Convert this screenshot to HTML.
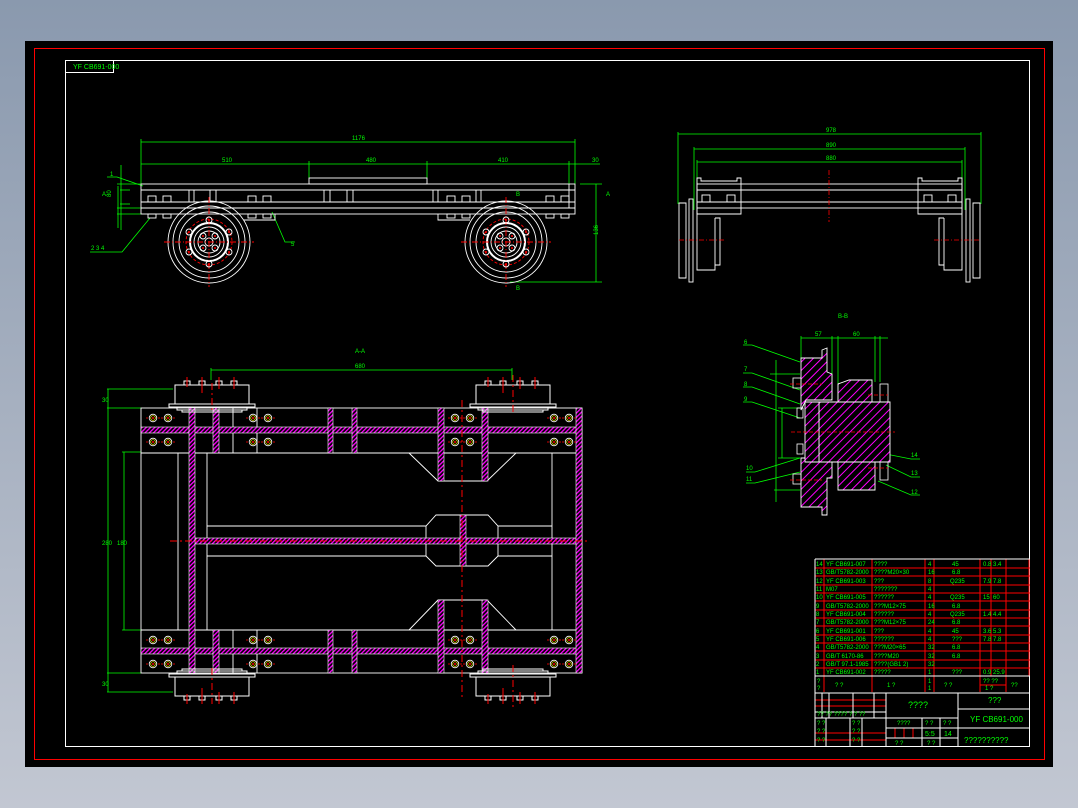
<!DOCTYPE html>
<html><head><meta charset="utf-8"><style>
html,body{margin:0;padding:0;width:1078px;height:808px;overflow:hidden;background:linear-gradient(#8a99ae,#c2c7d2);}
svg{display:block}
text{font-family:"Liberation Sans",sans-serif;fill:#00ff00;font-size:6px}
</style></head><body>
<svg width="1078" height="808" viewBox="0 0 1078 808" xmlns="http://www.w3.org/2000/svg">
<defs>
<pattern id="h" width="3" height="3" patternUnits="userSpaceOnUse" patternTransform="rotate(45)">
<rect width="3" height="3" fill="#000"/><rect width="1.3" height="3" fill="#ff00ff"/></pattern>
<pattern id="h2" width="6" height="6" patternUnits="userSpaceOnUse" patternTransform="rotate(45)">
<rect width="6" height="6" fill="#000"/><rect width="1" height="6" fill="#ff00ff"/></pattern>
<g id="bolt"><circle r="3.8" fill="none" stroke="#fff" stroke-width="0.8"/><circle r="2.3" fill="none" stroke="#ffff00" stroke-width="0.7"/><circle r="1" fill="#ff0000"/><line x1="-7" y1="0" x2="-5" y2="0" stroke="#f00" stroke-width="0.8"/><line x1="5" y1="0" x2="7" y2="0" stroke="#f00" stroke-width="0.8"/></g>
<g id="wheel" fill="none" stroke="#fff" stroke-width="0.9">
<circle r="41"/><circle r="36"/><circle r="30"/><circle r="19" stroke-width="2"/><circle r="15"/><circle r="11"/><circle r="4"/>
<circle r="23" stroke="#f00" stroke-dasharray="3 2"/>
<g stroke="#f00"><line x1="-45" y1="0" x2="45" y2="0" stroke-dasharray="6 2 1 2"/><line x1="0" y1="-45" x2="0" y2="45" stroke-dasharray="6 2 1 2"/></g>
<g><circle cx="0" cy="-22" r="3"/><circle cx="0" cy="22" r="3"/><circle cx="-20" cy="-10" r="3"/><circle cx="20" cy="-10" r="3"/><circle cx="-20" cy="10" r="3"/><circle cx="20" cy="10" r="3"/>
<circle cx="-6" cy="-6" r="3"/><circle cx="6" cy="-6" r="3"/><circle cx="-6" cy="6" r="3"/><circle cx="6" cy="6" r="3"/></g>
<g fill="#f00" stroke="none"><circle cx="0" cy="-22" r="1"/><circle cx="0" cy="22" r="1"/><circle cx="-6" cy="-6" r="1"/><circle cx="6" cy="-6" r="1"/><circle cx="-6" cy="6" r="1"/><circle cx="6" cy="6" r="1"/><circle cx="-20" cy="-10" r="1"/><circle cx="20" cy="-10" r="1"/><circle cx="-20" cy="10" r="1"/><circle cx="20" cy="10" r="1"/></g>
</g>
<g id="pwheel" fill="none" stroke="#fff" stroke-width="1">
<path d="M-37 0 V-19 H37 V0"/><rect x="-43" y="0" width="86" height="3"/><path d="M-35 3 V6 H35 V3"/><rect x="-30" y="6" width="60" height="2"/>
<g stroke="#fff"><rect x="-28" y="-23" width="6" height="4"/><rect x="-13" y="-23" width="6" height="4"/><rect x="4" y="-23" width="6" height="4"/><rect x="19" y="-23" width="6" height="4"/></g>
<g stroke="#f00"><line x1="-25" y1="-27" x2="-25" y2="-17"/><line x1="-10" y1="-27" x2="-10" y2="-11"/><line x1="7" y1="-27" x2="7" y2="-15"/><line x1="22" y1="-27" x2="22" y2="-15"/></g>
</g>
</defs>
<rect x="25" y="41" width="1028" height="726" fill="#000"/>
<rect x="34.5" y="48.5" width="1010" height="711" fill="none" stroke="#f00" stroke-width="1"/>
<rect x="65.5" y="60.5" width="964" height="686" fill="none" stroke="#fff" stroke-width="1"/>
<rect x="65.5" y="60.5" width="48" height="12" fill="none" stroke="#fff" stroke-width="1"/>
<text x="73" y="69" style="font-size:7px">YF CB691-000</text>

<!-- SIDE VIEW -->
<g stroke="#0f0" stroke-width="0.8" fill="none">
<line x1="141" y1="142" x2="575" y2="142"/><line x1="141" y1="139" x2="141" y2="186"/><line x1="575" y1="139" x2="575" y2="184"/>
<line x1="141" y1="164" x2="600" y2="164"/><line x1="309" y1="161" x2="309" y2="178"/><line x1="427" y1="161" x2="427" y2="178"/><line x1="569" y1="161" x2="569" y2="184"/>
<line x1="580" y1="184" x2="602" y2="184"/><line x1="596" y1="184" x2="596" y2="282"/><line x1="510" y1="282" x2="602" y2="282"/>
<line x1="117" y1="184" x2="141" y2="184"/><line x1="117" y1="208" x2="141" y2="208"/><line x1="121" y1="165" x2="121" y2="230"/><line x1="120" y1="190" x2="130" y2="190"/><line x1="120" y1="204" x2="130" y2="204"/>
<line x1="118" y1="186" x2="118" y2="228"/><line x1="117" y1="214" x2="141" y2="214"/>
<path d="M107 177 H117 L143 186"/><path d="M90 252 H122 L150 218"/><path d="M272 212 L285 242 H295"/>
</g>
<text x="352" y="140">1176</text><text x="222" y="162">510</text><text x="366" y="162">480</text><text x="498" y="162">410</text><text x="592" y="162">30</text>
<text x="110" y="176">1</text><text x="91" y="250">2 3 4</text><text x="291" y="246">5</text><text x="598" y="235" transform="rotate(-90 598 235)">136</text>
<text x="111" y="197" transform="rotate(-90 111 197)">80</text><text x="102" y="196">A</text><text x="606" y="196">A</text><text x="516" y="196">B</text><text x="516" y="290">B</text>
<g stroke="#fff" stroke-width="0.9" fill="none">
<rect x="141" y="184" width="434" height="30"/><rect x="309" y="178" width="118" height="6"/>
<line x1="141" y1="190" x2="575" y2="190"/><line x1="141" y1="202" x2="575" y2="202"/><line x1="141" y1="208" x2="575" y2="208"/>
<line x1="189" y1="190" x2="189" y2="202"/><line x1="194" y1="190" x2="194" y2="202"/><line x1="210" y1="190" x2="210" y2="202"/><line x1="216" y1="190" x2="216" y2="202"/><line x1="324" y1="190" x2="324" y2="202"/><line x1="330" y1="190" x2="330" y2="202"/><line x1="347" y1="190" x2="347" y2="202"/><line x1="353" y1="190" x2="353" y2="202"/><line x1="433" y1="190" x2="433" y2="202"/><line x1="438" y1="190" x2="438" y2="202"/><line x1="476" y1="190" x2="476" y2="202"/><line x1="481" y1="190" x2="481" y2="202"/><line x1="569" y1="184" x2="569" y2="208"/>
<path d="M275 214 V220 H244"/><path d="M438 214 V220 H470"/>
<g><rect x="148" y="196" width="8" height="6"/><rect x="163" y="196" width="8" height="6"/><rect x="248" y="196" width="8" height="6"/><rect x="263" y="196" width="8" height="6"/><rect x="447" y="196" width="8" height="6"/><rect x="462" y="196" width="8" height="6"/><rect x="546" y="196" width="8" height="6"/><rect x="561" y="196" width="8" height="6"/>
<rect x="148" y="214" width="8" height="4"/><rect x="163" y="214" width="8" height="4"/><rect x="248" y="214" width="8" height="4"/><rect x="263" y="214" width="8" height="4"/><rect x="447" y="214" width="8" height="4"/><rect x="462" y="214" width="8" height="4"/><rect x="546" y="214" width="8" height="4"/><rect x="561" y="214" width="8" height="4"/></g>
</g>
<use href="#wheel" x="209" y="242"/><use href="#wheel" x="506" y="242"/>

<!-- FRONT VIEW -->
<g stroke="#0f0" stroke-width="0.8" fill="none">
<line x1="678" y1="134" x2="981" y2="134"/><line x1="678" y1="132" x2="678" y2="204"/><line x1="981" y1="132" x2="981" y2="204"/>
<line x1="694" y1="149" x2="965" y2="149"/><line x1="694" y1="147" x2="694" y2="210"/><line x1="965" y1="147" x2="965" y2="210"/>
<line x1="697" y1="162" x2="962" y2="162"/><line x1="697" y1="160" x2="697" y2="185"/><line x1="962" y1="160" x2="962" y2="185"/>
</g>
<text x="826" y="132">978</text><text x="826" y="147">890</text><text x="826" y="160">880</text>
<g stroke="#fff" stroke-width="0.9" fill="none">
<rect x="697" y="184" width="265" height="24"/><line x1="697" y1="190" x2="962" y2="190"/><line x1="697" y1="202" x2="962" y2="202"/>
<path d="M697 184 V178 H701 V181 H737 V178 H741 V214 H697 Z"/><path d="M962 184 V178 H958 V181 H922 V178 H918 V214 H962 Z"/>
<rect x="702" y="195" width="8" height="7"/><rect x="727" y="195" width="8" height="7"/><rect x="924" y="195" width="8" height="7"/><rect x="948" y="195" width="8" height="7"/>
<path d="M686 203 H679 V278 H686 Z"/><rect x="689" y="199" width="4" height="83"/><path d="M697 208 V270 H715 V218 M715 218 H720 V265 H715"/>
<rect x="966" y="199" width="4" height="83"/><path d="M973 203 H980 V278 H973 Z"/><path d="M962 208 V270 H944 V218 M944 218 H939 V265 H944"/>
</g>
<g stroke="#f00" stroke-width="0.8" stroke-dasharray="5 2 1 2"><line x1="829" y1="170" x2="829" y2="222"/><line x1="679" y1="240" x2="725" y2="240"/><line x1="934" y1="240" x2="980" y2="240"/></g>

<!-- SECTION B-B -->
<text x="838" y="318">B-B</text>
<g stroke="#0f0" stroke-width="0.8" fill="none">
<line x1="801" y1="338" x2="888" y2="338"/><line x1="801" y1="336" x2="801" y2="360"/><line x1="832" y1="336" x2="832" y2="400"/><line x1="838" y1="336" x2="838" y2="400"/><line x1="875" y1="336" x2="875" y2="382"/><line x1="880" y1="336" x2="880" y2="382"/>
<line x1="776" y1="360" x2="776" y2="502"/><line x1="770" y1="374" x2="800" y2="374"/><line x1="774" y1="490" x2="800" y2="490"/><line x1="782" y1="408" x2="782" y2="458"/><line x1="778" y1="408" x2="800" y2="408"/><line x1="778" y1="458" x2="800" y2="458"/>
<path d="M743 345 H752 L800 362"/><path d="M743 373 H752 L800 390"/><path d="M743 387 H752 L800 404"/><path d="M743 402 H752 L800 418"/><path d="M746 472 H755 L800 458"/><path d="M746 483 H755 L800 472"/><path d="M920 459 H911 L876 452"/><path d="M920 477 H911 L886 465"/><path d="M920 495 H911 L878 481"/>
</g>
<text x="815" y="336">57</text><text x="853" y="336">60</text><text x="744" y="344">6</text><text x="744" y="371">7</text><text x="744" y="386">8</text><text x="744" y="401">9</text><text x="746" y="470">10</text><text x="746" y="481">11</text><text x="911" y="457">14</text><text x="911" y="475">13</text><text x="911" y="494">12</text>
<g stroke="#fff" stroke-width="0.9">
<path d="M801 358 H822 V350 L827 348 V372 L832 374 V400 H806 L801 410 Z" fill="url(#h2)"/>
<path d="M801 458 H832 V478 H827 V515 H822 V507 H801 Z" fill="url(#h2)"/>
<path d="M819 402 H890 V462 H819 Z" fill="url(#h2)"/>
<path d="M838 402 V384 L849 380 H872 V402 Z" fill="url(#h2)"/>
<path d="M838 462 H875 V490 H838 Z" fill="url(#h2)"/>
<path d="M805 402 H819 V462 H805 Z" fill="url(#h2)"/>
</g>
<g fill="none" stroke="#fff" stroke-width="0.8"><rect x="793" y="378" width="8" height="10"/><rect x="793" y="474" width="8" height="10"/><rect x="797" y="408" width="6" height="10"/><rect x="797" y="444" width="6" height="10"/><rect x="880" y="384" width="8" height="18"/><rect x="880" y="462" width="8" height="18"/></g>
<g stroke="#f00" stroke-width="0.8" stroke-dasharray="4 2"><line x1="790" y1="384" x2="822" y2="384"/><line x1="790" y1="480" x2="822" y2="480"/><line x1="791" y1="432" x2="895" y2="432"/><line x1="868" y1="395" x2="888" y2="395"/><line x1="868" y1="468" x2="888" y2="468"/></g>

<!-- PLAN VIEW -->
<g stroke="#0f0" stroke-width="0.8" fill="none">
<line x1="211" y1="370" x2="512" y2="370"/><line x1="211" y1="368" x2="211" y2="380"/><line x1="512" y1="368" x2="512" y2="380"/>
<line x1="107" y1="389" x2="173" y2="389"/><line x1="107" y1="408" x2="141" y2="408"/><line x1="107" y1="673" x2="141" y2="673"/><line x1="107" y1="692" x2="173" y2="692"/><line x1="108" y1="389" x2="108" y2="692"/>
<line x1="122" y1="452" x2="141" y2="452"/><line x1="122" y1="630" x2="141" y2="630"/><line x1="124" y1="452" x2="124" y2="630"/>
</g>
<text x="355" y="353">A-A</text><text x="355" y="368">680</text><text x="102" y="402">30</text><text x="102" y="545">280</text><text x="117" y="545">180</text><text x="102" y="686">30</text>
<g stroke="#fff" stroke-width="0.9" fill="none">
<rect x="141" y="408" width="441" height="265"/>
<line x1="141" y1="453" x2="582" y2="453"/><line x1="141" y1="630" x2="582" y2="630"/>
<line x1="178" y1="453" x2="178" y2="630"/><line x1="207" y1="453" x2="207" y2="630"/><line x1="552" y1="453" x2="552" y2="630"/>
<path d="M207 526 H426 L436 515 H488 L498 526 H552"/><path d="M207 556 H426 L436 566 H488 L498 556 H552"/>
<line x1="426" y1="526" x2="426" y2="556"/><line x1="498" y1="526" x2="498" y2="556"/>
<path d="M409 453 L438 481 H487 L516 453"/><path d="M409 630 L438 600 H487 L516 630"/>
<line x1="233" y1="408" x2="233" y2="453"/><line x1="257" y1="408" x2="257" y2="453"/><line x1="233" y1="630" x2="233" y2="673"/><line x1="257" y1="630" x2="257" y2="673"/>
</g>
<g fill="url(#h)" stroke="#fff" stroke-width="0.6">
<rect x="141" y="427" width="441" height="6"/><rect x="141" y="648" width="441" height="6"/><rect x="195" y="538" width="381" height="6"/>
<rect x="189" y="408" width="6" height="265"/><rect x="576" y="408" width="6" height="265"/>
<rect x="213" y="408" width="6" height="45"/><rect x="213" y="630" width="6" height="43"/>
<rect x="328" y="408" width="5" height="45"/><rect x="352" y="408" width="5" height="45"/><rect x="328" y="630" width="5" height="43"/><rect x="352" y="630" width="5" height="43"/>
<rect x="438" y="408" width="6" height="73"/><rect x="482" y="408" width="6" height="73"/><rect x="438" y="600" width="6" height="73"/><rect x="482" y="600" width="6" height="73"/>
<rect x="460" y="515" width="6" height="51"/>
</g>
<g>
<use href="#bolt" x="153" y="418"/><use href="#bolt" x="168" y="418"/><use href="#bolt" x="253" y="418"/><use href="#bolt" x="268" y="418"/><use href="#bolt" x="455" y="418"/><use href="#bolt" x="470" y="418"/><use href="#bolt" x="554" y="418"/><use href="#bolt" x="569" y="418"/>
<use href="#bolt" x="153" y="442"/><use href="#bolt" x="168" y="442"/><use href="#bolt" x="253" y="442"/><use href="#bolt" x="268" y="442"/><use href="#bolt" x="455" y="442"/><use href="#bolt" x="470" y="442"/><use href="#bolt" x="554" y="442"/><use href="#bolt" x="569" y="442"/>
<use href="#bolt" x="153" y="640"/><use href="#bolt" x="168" y="640"/><use href="#bolt" x="253" y="640"/><use href="#bolt" x="268" y="640"/><use href="#bolt" x="455" y="640"/><use href="#bolt" x="470" y="640"/><use href="#bolt" x="554" y="640"/><use href="#bolt" x="569" y="640"/>
<use href="#bolt" x="153" y="664"/><use href="#bolt" x="168" y="664"/><use href="#bolt" x="253" y="664"/><use href="#bolt" x="268" y="664"/><use href="#bolt" x="455" y="664"/><use href="#bolt" x="470" y="664"/><use href="#bolt" x="554" y="664"/><use href="#bolt" x="569" y="664"/>
</g>
<use href="#pwheel" x="212" y="404"/><use href="#pwheel" x="513" y="404"/>
<use href="#pwheel" transform="translate(212 677) scale(1 -1)"/><use href="#pwheel" transform="translate(513 677) scale(1 -1)"/>
<g stroke="#f00" stroke-width="1" stroke-dasharray="7 3 2 3"><line x1="462" y1="400" x2="462" y2="700"/><line x1="170" y1="541" x2="588" y2="541"/><line x1="212" y1="383" x2="212" y2="413"/><line x1="513" y1="375" x2="513" y2="413"/><line x1="212" y1="668" x2="212" y2="704"/><line x1="513" y1="665" x2="513" y2="708"/></g>

<!-- TITLE BLOCK -->
<g stroke="#f00" stroke-width="1" fill="none">
<line x1="815" y1="568" x2="1030" y2="568"/><line x1="815" y1="576" x2="1030" y2="576"/><line x1="815" y1="585" x2="1030" y2="585"/><line x1="815" y1="593" x2="1030" y2="593"/><line x1="815" y1="601" x2="1030" y2="601"/><line x1="815" y1="610" x2="1030" y2="610"/><line x1="815" y1="618" x2="1030" y2="618"/><line x1="815" y1="626" x2="1030" y2="626"/><line x1="815" y1="635" x2="1030" y2="635"/><line x1="815" y1="643" x2="1030" y2="643"/><line x1="815" y1="651" x2="1030" y2="651"/><line x1="815" y1="660" x2="1030" y2="660"/><line x1="815" y1="668" x2="1030" y2="668"/>
<line x1="824" y1="559" x2="824" y2="692"/><line x1="872" y1="559" x2="872" y2="692"/><line x1="925" y1="559" x2="925" y2="692"/><line x1="934" y1="559" x2="934" y2="692"/><line x1="980" y1="559" x2="980" y2="692"/><line x1="991" y1="559" x2="991" y2="676"/><line x1="1006" y1="559" x2="1006" y2="692"/><line x1="1029" y1="559" x2="1029" y2="676"/><line x1="980" y1="685" x2="1006" y2="685"/>
<line x1="815" y1="700" x2="886" y2="700"/><line x1="815" y1="706" x2="886" y2="706"/><line x1="815" y1="733" x2="886" y2="733"/><line x1="815" y1="740" x2="886" y2="740"/>
<line x1="895" y1="728" x2="895" y2="738"/><line x1="904" y1="728" x2="904" y2="738"/><line x1="913" y1="728" x2="913" y2="738"/>
</g>
<g stroke="#fff" stroke-width="1" fill="none">
<line x1="815" y1="559" x2="1030" y2="559"/><line x1="815" y1="559" x2="815" y2="747"/><line x1="815" y1="676" x2="1030" y2="676"/><line x1="815" y1="693" x2="1030" y2="693"/>
<line x1="886" y1="693" x2="886" y2="747"/><line x1="958" y1="693" x2="958" y2="747"/><line x1="958" y1="709" x2="1030" y2="709"/><line x1="958" y1="728" x2="1030" y2="728"/>
<line x1="886" y1="718" x2="958" y2="718"/><line x1="886" y1="728" x2="958" y2="728"/><line x1="886" y1="738" x2="958" y2="738"/><line x1="922" y1="718" x2="922" y2="747"/><line x1="940" y1="718" x2="940" y2="747"/>
<line x1="822" y1="693" x2="822" y2="718"/><line x1="829" y1="693" x2="829" y2="718"/><line x1="853" y1="693" x2="853" y2="718"/><line x1="874" y1="693" x2="874" y2="718"/><line x1="815" y1="712" x2="886" y2="712"/><line x1="815" y1="718" x2="886" y2="718"/>
<line x1="826" y1="718" x2="826" y2="747"/><line x1="850" y1="718" x2="850" y2="747"/><line x1="862" y1="718" x2="862" y2="747"/>
</g>
<g style="font-size:5px">
<text x="816" y="566">14</text><text x="826" y="566">YF CB691-007</text><text x="874" y="566">????</text><text x="928" y="566">4</text><text x="952" y="566">45</text><text x="983" y="566">0.8</text><text x="993" y="566">3.4</text>
<text x="816" y="574">13</text><text x="826" y="574">GB/T5782-2000</text><text x="874" y="574">????M20×30</text><text x="928" y="574">16</text><text x="952" y="574">6.8</text>
<text x="816" y="583">12</text><text x="826" y="583">YF CB691-003</text><text x="874" y="583">???</text><text x="928" y="583">8</text><text x="950" y="583">Q235</text><text x="983" y="583">7.9</text><text x="993" y="583">7.8</text>
<text x="816" y="591">11</text><text x="826" y="591">M07</text><text x="874" y="591">???????</text><text x="928" y="591">4</text>
<text x="816" y="599">10</text><text x="826" y="599">YF CB691-005</text><text x="874" y="599">??????</text><text x="928" y="599">4</text><text x="950" y="599">Q235</text><text x="983" y="599">15</text><text x="993" y="599">60</text>
<text x="816" y="608">9</text><text x="826" y="608">GB/T5782-2000</text><text x="874" y="608">???M12×75</text><text x="928" y="608">16</text><text x="952" y="608">6.8</text>
<text x="816" y="616">8</text><text x="826" y="616">YF CB691-004</text><text x="874" y="616">??????</text><text x="928" y="616">4</text><text x="950" y="616">Q235</text><text x="983" y="616">1.4</text><text x="993" y="616">4.4</text>
<text x="816" y="624">7</text><text x="826" y="624">GB/T5782-2000</text><text x="874" y="624">???M12×75</text><text x="928" y="624">24</text><text x="952" y="624">6.8</text>
<text x="816" y="633">6</text><text x="826" y="633">YF CB691-001</text><text x="874" y="633">???</text><text x="928" y="633">4</text><text x="952" y="633">45</text><text x="983" y="633">3.6</text><text x="993" y="633">5.3</text>
<text x="816" y="641">5</text><text x="826" y="641">YF CB691-006</text><text x="874" y="641">??????</text><text x="928" y="641">4</text><text x="952" y="641">???</text><text x="983" y="641">7.8</text><text x="993" y="641">7.8</text>
<text x="816" y="649">4</text><text x="826" y="649">GB/T5782-2000</text><text x="874" y="649">???M20×65</text><text x="928" y="649">32</text><text x="952" y="649">6.8</text>
<text x="816" y="658">3</text><text x="826" y="658">GB/T 6170-86</text><text x="874" y="658">????M20</text><text x="928" y="658">32</text><text x="952" y="658">6.8</text>
<text x="816" y="666">2</text><text x="826" y="666">GB/T 97.1-1985</text><text x="874" y="666">????(GB1 2)</text><text x="928" y="666">32</text>
<text x="816" y="674">1</text><text x="826" y="674">YF CB691-002</text><text x="874" y="674">?????</text><text x="928" y="674">1</text><text x="952" y="674">???</text><text x="983" y="674">0.9</text><text x="993" y="674">25.9</text>
<text x="817" y="683">?</text><text x="817" y="690">?</text><text x="835" y="687">?  ?</text><text x="887" y="687">1   ?</text><text x="928" y="683">1</text><text x="928" y="690">1</text><text x="944" y="687">?   ?</text><text x="983" y="683">??  ??</text><text x="985" y="690">1  ?</text><text x="1011" y="687">??</text>
<text x="817" y="716">?? ?? ????  ?  ?  ??</text><text x="817" y="725">? ?</text><text x="817" y="733">? ?</text><text x="817" y="742">? ?</text><text x="852" y="725">? ?</text><text x="852" y="733">? ?</text><text x="852" y="742">? ?</text>
<text x="897" y="725">????</text><text x="925" y="725">? ?</text><text x="943" y="725">? ?</text><text x="895" y="745">?      ?</text><text x="927" y="745">?   ?</text>
</g>
<text x="908" y="708" style="font-size:9px">????</text><text x="988" y="703" style="font-size:8px">???</text>
<text x="970" y="722" style="font-size:8px">YF CB691-000</text><text x="925" y="736" style="font-size:7px">5:5</text><text x="944" y="736" style="font-size:7px">14</text>
<text x="964" y="743" style="font-size:8px">??????????</text>
</svg>
</body></html>
